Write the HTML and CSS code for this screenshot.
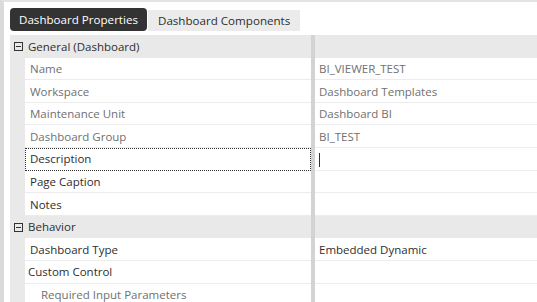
FILE: index.html
```html
<!DOCTYPE html>
<html lang="en">
<head>
    <meta charset="UTF-8">
    <title>Dashboard Properties</title>
    <link rel="stylesheet" href="styles.css">
</head>
<body>
    <div id="page">
        <div class="tabs">
            <div class="tab active">Dashboard Properties</div>
            <div class="tab">Dashboard Components</div>
        </div>
        <div class="grid">
            <div class="row section">
                <div class="gutter"><svg width="9" height="9" viewBox="0 0 9 9"><rect x="0.5" y="0.5" width="8" height="8" fill="none" stroke="#333"/><line x1="2" y1="4.5" x2="7" y2="4.5" stroke="#333"/></svg></div>
                <div class="name">General (Dashboard)</div>
                <div class="split"></div>
                <div class="value"></div>
            </div>
            <div class="row readonly">
                <div class="gutter"></div>
                <div class="name">Name</div>
                <div class="split"></div>
                <div class="value">BI_VIEWER_TEST</div>
            </div>
            <div class="row readonly">
                <div class="gutter"></div>
                <div class="name">Workspace</div>
                <div class="split"></div>
                <div class="value">Dashboard Templates</div>
            </div>
            <div class="row readonly">
                <div class="gutter"></div>
                <div class="name">Maintenance Unit</div>
                <div class="split"></div>
                <div class="value">Dashboard BI</div>
            </div>
            <div class="row readonly">
                <div class="gutter"></div>
                <div class="name">Dashboard Group</div>
                <div class="split"></div>
                <div class="value">BI_TEST</div>
            </div>
            <div class="row">
                <div class="gutter"></div>
                <div class="name focused">Description</div>
                <div class="split"></div>
                <div class="value"><span class="caret"></span></div>
            </div>
            <div class="row">
                <div class="gutter"></div>
                <div class="name">Page Caption</div>
                <div class="split"></div>
                <div class="value"></div>
            </div>
            <div class="row">
                <div class="gutter"></div>
                <div class="name">Notes</div>
                <div class="split"></div>
                <div class="value"></div>
            </div>
            <div class="row section">
                <div class="gutter"><svg width="9" height="9" viewBox="0 0 9 9"><rect x="0.5" y="0.5" width="8" height="8" fill="none" stroke="#333"/><line x1="2" y1="4.5" x2="7" y2="4.5" stroke="#333"/></svg></div>
                <div class="name">Behavior</div>
                <div class="split"></div>
                <div class="value"></div>
            </div>
            <div class="row">
                <div class="gutter"></div>
                <div class="name">Dashboard Type</div>
                <div class="split"></div>
                <div class="value">Embedded Dynamic</div>
            </div>
            <div class="row">
                <div class="gutter"></div>
                <div class="name group">Custom Control</div>
                <div class="split"></div>
                <div class="value"></div>
            </div>
            <div class="row readonly">
                <div class="gutter"></div>
                <div class="name child">Required Input Parameters</div>
                <div class="split"></div>
                <div class="value"></div>
            </div>
        </div>
    </div>
</body>
</html>
```

FILE: styles.css
```css
body {
    margin: 0;
    background-color: #ffffff;
    font-family: "Open Sans", "Noto Sans", sans-serif;
    font-size: 11.5px;
    color: #2e2e2e;
    overflow: hidden;
}
#page {
    height: 100vh;
    border-top: 2px solid #e3e3e3;
    border-left: 4px solid #dadada;
    box-sizing: border-box;
}
.tabs {
    display: flex;
    align-items: flex-end;
    padding: 6px 0 0 6px;
    height: 29px;
    box-sizing: border-box;
}
.tab {
    height: 21px;
    line-height: 21px;
    padding: 0 10px;
    background-color: #ebebeb;
    color: #2e2e2e;
    font-size: 11.6px;
}
.tab.active {
    height: 23px;
    line-height: 23px;
    padding: 0 9px;
    background-color: #333333;
    color: #ffffff;
    border-radius: 4px;
    margin-right: 1px;
}
.grid {
    margin: 4px 0 0 6px;
}
.row {
    display: flex;
    height: 22.6px;
}
.gutter {
    width: 15px;
    flex: none;
    background-color: #e9e9e9;
    display: flex;
    align-items: center;
    justify-content: center;
}
.name {
    width: 286px;
    flex: none;
    padding: 1.5px 0 0 5px;
    box-sizing: border-box;
    border-bottom: 1px solid #ececec;
    line-height: 20px;
    white-space: nowrap;
}
.split {
    width: 4px;
    flex: none;
    background-color: #d3d3d3;
}
.value {
    flex: 1;
    padding: 1.5px 0 0 4px;
    box-sizing: border-box;
    border-bottom: 1px solid #ececec;
    line-height: 20px;
    white-space: nowrap;
}
.section .name,
.section .value {
    background-color: #e9e9e9;
    border-bottom-color: #e9e9e9;
    padding-left: 3px;
}
.section .gutter {
    justify-content: flex-end;
    padding-right: 2px;
    box-sizing: border-box;
}
.readonly .name,
.readonly .value {
    color: #707070;
}
.name.focused {
    border: 1px dotted #333333;
    padding-top: 0.5px;
    padding-left: 4px;
}
.name.group {
    padding-left: 3px;
}
.name.child {
    padding-left: 16px;
}
.caret {
    display: block;
    width: 1px;
    height: 14px;
    margin-top: 3.5px;
    background-color: #333333;
}
```
